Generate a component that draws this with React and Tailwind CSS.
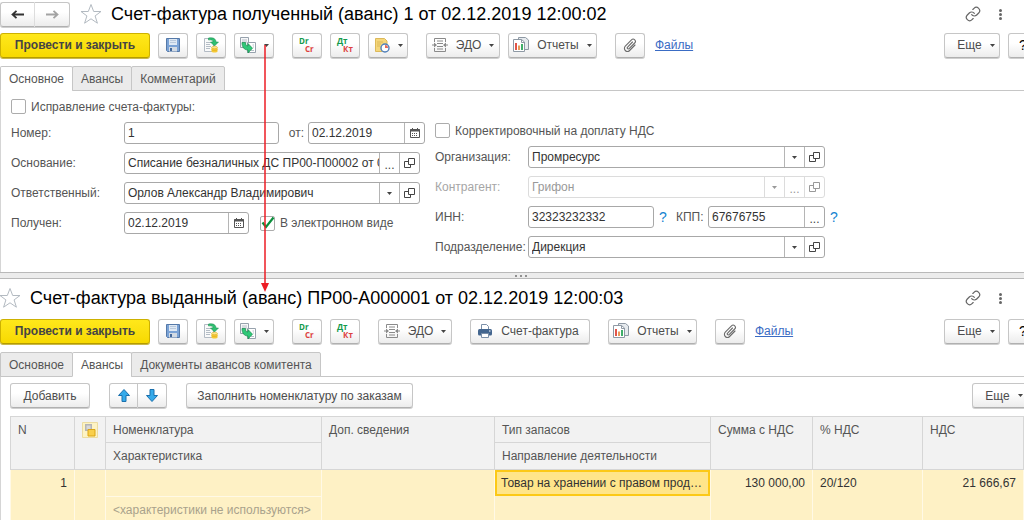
import clsx from "clsx";
import { Link } from "lucide-react";

const FONT = "font-['Liberation_Sans',Arial,sans-serif]";

/* ---------- icons ---------- */

function Caret({ className = "text-[#444]" }) {
  return (
    <svg className={clsx("shrink-0", className)} width="5" height="3" viewBox="0 0 5 3" fill="currentColor">
      <path d="M0 0h5L2.5 3z" />
    </svg>
  );
}

function SaveIcon() {
  return (
    <svg width="16" height="16" viewBox="0 0 16 16">
      <path d="M1.5 1.5h13v13h-12l-1-1z" fill="#7ba3d6" stroke="#5579a8" />
      <path d="M4 2h8v6H4z" fill="#dfe9f4" />
      <path d="M5 3.5h6M5 5.5h6" stroke="#b9c9dc" />
      <path d="M4 10h8v4.5H4z" fill="#d3dbe4" />
      <path d="M5 11h2v3H5z" fill="#44699b" />
    </svg>
  );
}

function PostIcon() {
  return (
    <svg width="16" height="16" viewBox="0 0 16 16">
      <path d="M1.5 1.5h9v13h-9z" fill="#fafafa" stroke="#b3bbc4" />
      <path d="M3 5.5h5M3 7.5h4M3 9.5h5M3 11.5h4" stroke="#b4bdc6" />
      <path d="M5.5 1c5-1 7.500 1 7.500 4h2.500L11.500 9 7.500 5H10c0-1.500-1.500-2.500-4.500-2z" fill="#2fbf71" stroke="#16894b" strokeWidth=".5" />
      <path d="M8.500 10.500h6v4c0 1.300-6 1.300-6 0z" fill="#f6c935" />
      <ellipse cx="11.500" cy="10.500" rx="3" ry="1.200" fill="#fce48b" stroke="#d9a91a" strokeWidth=".5" />
      <path d="M8.500 12.500c0 1.200 6 1.200 6 0" fill="none" stroke="#d9a91a" strokeWidth=".6" />
    </svg>
  );
}

function BasedOnIcon() {
  return (
    <svg width="16" height="16" viewBox="0 0 16 16">
      <path d="M.5.500h8v10h-8z" fill="#f7f8f9" stroke="#97a2ad" />
      <path d="M2 3h5M2 5h5" stroke="#b4bdc6" />
      <path d="M7.500 5.500h8v10h-8z" fill="#fff" stroke="#97a2ad" />
      <path d="M12.500 8h1.500M13 10h1M11 13.500h3" stroke="#b4bdc6" />
      <path d="M2 5.500h3.500c0 2.500.8 3.500 2.500 3.500V6.500l4.500 4.700L8 16v-3C4 13 2 10 2 5.500z" fill="#2fc878" stroke="#16894b" strokeWidth=".7" />
    </svg>
  );
}

function PostingsIcon({ top, bottom }) {
  return (
    <svg width="20" height="18" viewBox="0 0 20 18" fontFamily="Open Sans, sans-serif" fontSize="8" fontWeight="700">
      <text x="2" y="8" fill="#149a4d">{top}</text>
      <text x="8" y="16" fill="#dd4040">{bottom}</text>
    </svg>
  );
}

function ScheduleIcon() {
  return (
    <svg width="16" height="16" viewBox="0 0 16 16">
      <path d="M1.500 1.500h9l2.500 2.500v10.500H1.500z" fill="#f5d77b" stroke="#dcb95a" />
      <path d="M3 5h6M3 7h4M3 9h3" stroke="#dcb95a" />
      <circle cx="11" cy="11" r="4" fill="#fff" stroke="#4f7fba" strokeWidth="1.400" />
      <path d="M11 8v3h3a3 3 0 0 0-3-3z" fill="#e66a5c" />
    </svg>
  );
}

function EdoIcon() {
  return (
    <svg width="16" height="16" viewBox="0 0 16 16" fill="none" stroke="#8a8a8a">
      <path d="M2.500 5V1.500h11V5M2.500 11v3.500h11V11" />
      <path d="M5 4h6M5 6.500h6M5 9.500h6M5 12h6" />
      <path d="M0 8h3M13 8h3" />
      <path d="M2 5.500L5 8l-3 2.500zM14 5.500L11 8l3 2.500z" fill="#8a8a8a" stroke="none" />
    </svg>
  );
}

function ReportsIcon() {
  return (
    <svg width="16" height="16" viewBox="0 0 16 16">
      <path d="M5.500.500h7l3 2.500v9.500h-10z" fill="#e6eaee" stroke="#8e99a4" />
      <path d="M.5 2.500h8l3 2.500v9.500H.5z" fill="#fff" stroke="#8e99a4" />
      <path d="M8.500 2.500v3h3" fill="none" stroke="#8e99a4" />
      <path d="M2 6h2v7H2z" fill="#e25549" />
      <path d="M5 8.500h2V13H5z" fill="#e89a5a" />
      <path d="M8 7h2v6H8z" fill="#3fae69" />
    </svg>
  );
}

function ClipIcon() {
  return (
    <svg width="14" height="14" viewBox="0 0 14 14" fill="none" stroke="#6b6b6b" strokeWidth="1.100" strokeLinecap="round">
      <path d="M9.500 4L4.600 9.200a1 1 0 0 0 1.500 1.500L11.700 5a2.200 2.200 0 0 0-3.200-3.200L2.300 8.200a3 3 0 0 0 4.300 4.300L12 7" />
    </svg>
  );
}

function PrinterIcon() {
  return (
    <svg width="16" height="16" viewBox="0 0 16 16">
      <path d="M4.500 7V1.500h5l2 2V7" fill="#fff" stroke="#7b8fa8" />
      <rect x="1" y="6" width="14" height="6.500" rx="1.500" fill="#44668f" />
      <path d="M4.500 10.500h7v4h-7z" fill="#fff" stroke="#7b8fa8" />
      <path d="M12 8h1.500" stroke="#fff" />
    </svg>
  );
}

function StarIcon() {
  return (
    <svg width="24" height="22" viewBox="0 0 24 22" fill="#fff" stroke="#b3bac1">
      <path d="M12 1.500l2.700 7h7.300l-5.900 4.400 2.300 7.300L12 15.800l-6.400 4.400 2.300-7.300L2 8.500h7.300z" />
    </svg>
  );
}

function CalendarIcon() {
  return (
    <svg width="10" height="10" viewBox="0 0 10 10" fill="none" stroke="#555">
      <path d="M.5 1.500h9v8h-9z" />
      <path d="M0 2.500h10" strokeWidth="2" />
      <path d="M2.500 0v2M7.500 0v2" />
      <path d="M2 5.500h6M2 7.500h6" strokeDasharray="1 1" />
    </svg>
  );
}

function OpenIcon() {
  return (
    <svg width="11" height="10" viewBox="0 0 11 10" fill="none" stroke="currentColor">
      <path d="M4.500.500h6v6h-6z" />
      <path d="M4 3.500H.5v6h6V7" />
    </svg>
  );
}

function NavArrow({ back }) {
  return (
    <svg width="13" height="9" viewBox="0 0 13 9" fill="none" stroke={back ? "#333" : "#a3a3a3"} strokeWidth="1.800">
      {back ? <path d="M13 4.500H2M5.500.800L1.500 4.500l4 3.700" /> : <path d="M0 4.500h11M7.500.800l4 3.700-4 3.700" />}
    </svg>
  );
}

function MoveArrow({ down }) {
  return (
    <svg width="12" height="13" viewBox="0 0 12 13" fill="#35aaea" stroke="#1b70ad" strokeLinejoin="round">
      {down ? <path d="M4 .5h4v6h3.500L6 12.500.5 6.500H4z" /> : <path d="M4 12.500h4v-6h3.500L6 .5.5 6.500H4z" />}
    </svg>
  );
}

function StockIcon() {
  return (
    <svg width="16" height="16" viewBox="0 0 16 16">
      <path d="M.5.500h15v15H.5z" fill="#fdf3c4" stroke="#ecdca0" />
      <path d="M3 2h7v7H3z" fill="#b5b5b5" />
      <path d="M4.500 3.500h4v4h-4z" fill="#d9d9d9" />
      <path d="M6 7.500h7v6.500H6z" fill="#f9cf4b" stroke="#dba514" />
    </svg>
  );
}

/* ---------- controls ---------- */

const raised =
  "border border-[#c6c6c6] border-b-[#b0b0b0] bg-linear-to-b from-white from-40% to-[#ececec] text-[#4d4d4d] shadow-[0_1px_0_#cfcfcf]";

function Button({ className, children, ...rest }) {
  return (
    <button
      type="button"
      className={clsx("flex h-[25px] shrink-0 items-center justify-center rounded-[3px] whitespace-nowrap", raised, className)}
      {...rest}
    >
      {children}
    </button>
  );
}

function Check({ label, checked }) {
  return (
    <label className="flex h-[15px] items-center gap-[5px] whitespace-nowrap">
      <span className="relative flex">
        <input
          type="checkbox"
          defaultChecked={checked}
          className="peer size-[15px] appearance-none rounded-[2px] border border-[#acacac] bg-white"
        />
        <svg
          className="pointer-events-none absolute top-0 left-0 hidden peer-checked:block"
          width="15"
          height="15"
          viewBox="0 0 15 15"
          fill="none"
          stroke="#0b8f3c"
          strokeWidth="2.200"
        >
          <path d="M2.500 6.500l3.500 4.500L13.500 1.500" />
        </svg>
      </span>
      {label}
    </label>
  );
}

const fieldButtons = {
  calendar: { label: "Выбрать дату", icon: <CalendarIcon /> },
  list: { label: "Показать список", icon: <Caret className="" /> },
  choose: { label: "Выбрать", icon: <span className="pt-1">...</span> },
  open: { label: "Открыть", icon: <OpenIcon /> },
};

function Field({ id, value, buttons = [], disabled, className }) {
  return (
    <div
      className={clsx(
        "flex h-[22px] shrink-0 overflow-hidden rounded-[3px] border bg-white",
        disabled ? "border-[#dcdcdc] text-[#999]" : "border-[#a8a8a8] text-[#333]",
        className
      )}
    >
      <input id={id} defaultValue={value} disabled={disabled} className="min-w-0 flex-1 pl-[3px]" />
      {buttons.map((b) => (
        <button
          key={b}
          type="button"
          disabled={disabled}
          aria-label={fieldButtons[b].label}
          className={clsx(
            "flex w-5 shrink-0 items-center justify-center border-l",
            disabled ? "border-[#dcdcdc]" : "border-[#b5b5b5] text-[#444]"
          )}
        >
          {fieldButtons[b].icon}
        </button>
      ))}
    </div>
  );
}

function Row({ id, label, labelClass, muted, children }) {
  return (
    <div className="flex h-[22px] items-center">
      <label htmlFor={id} className={clsx("shrink-0 whitespace-nowrap", labelClass, muted && "text-[#a6a6a6]")}>
        {label}
      </label>
      {children}
    </div>
  );
}

function Hint() {
  return (
    <button type="button" aria-label="Подсказка" className="w-[18px] shrink-0 text-center text-sm text-[#1583d0]">
      ?
    </button>
  );
}

function TitleBar({ title, nav }) {
  return (
    <header className="flex h-7 items-center">
      {nav && (
        <div className="mr-[9px] flex">
          <Button className="h-6 w-[35px] rounded-r-none border-r-[#ddd]" aria-label="Назад">
            <NavArrow back />
          </Button>
          <Button className="h-6 w-[35px] rounded-l-none border-l-0" aria-label="Вперед">
            <NavArrow />
          </Button>
        </div>
      )}
      <button type="button" aria-label="В избранное" className={nav ? "" : "-ml-0.5"}>
        <StarIcon />
      </button>
      <h1 className="ml-2 text-lg whitespace-nowrap text-black">{title}</h1>
      <div className="mr-[22px] ml-auto flex items-center gap-[18px]">
        <button type="button" aria-label="Получить ссылку">
          <Link size={16} strokeWidth={1.8} color="#666" />
        </button>
        <button type="button" aria-label="Меню" className="flex flex-col gap-px">
          <i className="size-[3px] rounded-full bg-[#666]" />
          <i className="size-[3px] rounded-full bg-[#666]" />
          <i className="size-[3px] rounded-full bg-[#666]" />
        </button>
      </div>
    </header>
  );
}

// The toolbar is wider than the window: the help button is cut off at the right edge.
function Toolbar({ children }) {
  return (
    <div className="-mr-[14px] flex h-[26px] items-center gap-2">
      <button
        type="button"
        className="h-[25px] w-[150px] shrink-0 rounded-[3px] border border-[#cdb100] border-b-[#b59c00] bg-linear-to-b from-[#ffe81a] to-[#f7d900] font-bold whitespace-nowrap text-[#444] shadow-[0_1px_0_#c9b84a]"
      >
        Провести и закрыть
      </button>
      <Button className="w-[30px]" aria-label="Записать"><SaveIcon /></Button>
      <Button className="w-[30px]" aria-label="Провести"><PostIcon /></Button>
      <Button className="w-10 gap-2" aria-label="Создать на основании"><BasedOnIcon /><Caret /></Button>
      <Button className="ml-[10px] w-[30px]" aria-label="Проводки Dr/Cr"><PostingsIcon top="Dr" bottom="Cr" /></Button>
      <Button className="w-[30px]" aria-label="Проводки Дт/Кт"><PostingsIcon top="Дт" bottom="Кт" /></Button>
      {children}
      <Button className="ml-[10px] w-[30px]" aria-label="Присоединенные файлы"><ClipIcon /></Button>
      <a href="#files" className="ml-[2px] text-[#3a6cc4] underline">Файлы</a>
      <Button className="ml-auto w-14 gap-2 pl-2">Еще <Caret /></Button>
      <Button className="w-[30px] text-sm text-black" aria-label="Справка">?</Button>
    </div>
  );
}

function Tabs({ items, active }) {
  return (
    <div role="tablist" className="flex h-[25px] border-b border-[#c6c6c6]">
      {items.map((t) => (
        <button
          key={t}
          type="button"
          role="tab"
          aria-selected={t === active}
          className={clsx(
            "-mr-px h-[25px] rounded-t-[2px] border border-[#c6c6c6] px-2 whitespace-nowrap",
            t === active ? "border-b-white bg-white" : "bg-[#ebebeb]"
          )}
        >
          {t}
        </button>
      ))}
    </div>
  );
}

/* ---------- windows ---------- */

function ReceivedInvoice() {
  return (
    <section>
      <TitleBar nav title="Счет-фактура полученный (аванс) 1 от 02.12.2019 12:00:02" />
      <div className="mt-1 mb-2">
        <Toolbar>
          <Button className="w-10 gap-2" aria-label="Отложить"><ScheduleIcon /><Caret /></Button>
          <Button className="ml-[10px] w-[74px] gap-2"><EdoIcon />ЭДО<Caret /></Button>
          <Button className="w-[89px] gap-2"><ReportsIcon />Отчеты<Caret /></Button>
        </Toolbar>
      </div>
      <Tabs items={["Основное", "Авансы", "Комментарий"]} active="Основное" />
      <div className="flex h-[181px] gap-[10px] border-l border-[#d5d5d5] pl-[10px]">
        <div className="flex w-[414px] shrink-0 flex-col gap-2 pt-2">
          <Check label="Исправление счета-фактуры:" />
          <Row id="number" label="Номер:" labelClass="w-[113px]">
            <Field id="number" value="1" className="w-[155px]" />
            <label htmlFor="date" className="w-[29px] pr-1 text-right">от:</label>
            <Field id="date" value="02.12.2019" buttons={["calendar"]} className="w-[117px]" />
          </Row>
          <Row id="basis" label="Основание:" labelClass="w-[113px]">
            <Field
              id="basis"
              value="Списание безналичных ДС ПР00-П00002 от 02.12.2019"
              buttons={["choose", "open"]}
              className="w-[296px]"
            />
          </Row>
          <Row id="person" label="Ответственный:" labelClass="w-[113px]">
            <Field id="person" value="Орлов Александр Владимирович" buttons={["list", "open"]} className="w-[296px]" />
          </Row>
          <Row id="received" label="Получен:" labelClass="w-[113px]">
            <Field id="received" value="02.12.2019" buttons={["calendar"]} className="mr-[11px] w-[125px]" />
            <Check label="В электронном виде" checked />
          </Row>
        </div>
        <div className="flex shrink-0 flex-col gap-2 pt-8">
          <Check label="Корректировочный на доплату НДС" />
          <Row id="org" label="Организация:" labelClass="w-[93px]">
            <Field id="org" value="Промресурс" buttons={["list", "open"]} className="w-[297px]" />
          </Row>
          <Row id="partner" label="Контрагент:" labelClass="w-[93px]" muted>
            <Field id="partner" value="Грифон" buttons={["list", "choose", "open"]} disabled className="w-[297px]" />
          </Row>
          <Row id="inn" label="ИНН:" labelClass="w-[93px]">
            <Field id="inn" value="32323232332" className="w-[126px]" />
            <Hint />
            <label htmlFor="kpp" className="w-9 pl-1">КПП:</label>
            <Field id="kpp" value="67676755" buttons={["choose"]} className="w-[117px]" />
            <Hint />
          </Row>
          <Row id="unit" label="Подразделение:" labelClass="w-[93px]">
            <Field id="unit" value="Дирекция" buttons={["list", "open"]} className="w-[297px]" />
          </Row>
        </div>
      </div>
    </section>
  );
}

function Splitter() {
  return (
    <div className="flex h-[7px] items-center justify-center gap-[3px] border-y border-[#b9b9b9] bg-[#ececec] pl-[18px]">
      <i className="size-[2px] bg-[#909090]" />
      <i className="size-[2px] bg-[#909090]" />
      <i className="size-[2px] bg-[#909090]" />
    </div>
  );
}

function AdvancesTable() {
  const th = "border border-[#d6d6d6] px-[7px] pt-[5px] text-left align-top font-normal whitespace-nowrap";
  const td = "border-x border-[#fff9e6] px-[7px] pt-[5px] align-top whitespace-nowrap";
  return (
    <table className="w-full table-fixed border-collapse border border-[#b9b9b9]">
      <colgroup>
        <col className="w-16" />
        <col className="w-[31px]" />
        <col className="w-[216px]" />
        <col className="w-[173px]" />
        <col className="w-[216px]" />
        <col className="w-[102px]" />
        <col className="w-[110px]" />
        <col />
      </colgroup>
      <thead className="bg-[#f2f2f2]">
        <tr className="h-[26px]">
          <th rowSpan={2} className={th}>N</th>
          <th rowSpan={2} className={th} aria-label="Состояние"><StockIcon /></th>
          <th className={th}>Номенклатура</th>
          <th rowSpan={2} className={th}>Доп. сведения</th>
          <th className={th}>Тип запасов</th>
          <th rowSpan={2} className={th}>Сумма с НДС</th>
          <th rowSpan={2} className={th}>% НДС</th>
          <th rowSpan={2} className={th}>НДС</th>
        </tr>
        <tr className="h-[27px]">
          <th className={th}>Характеристика</th>
          <th className={th}>Направление деятельности</th>
        </tr>
      </thead>
      <tbody className="bg-[#fef1c5] text-[#333]">
        <tr className="h-[26px]">
          <td rowSpan={2} className={clsx(td, "text-right")}>1</td>
          <td rowSpan={2} className={td} />
          <td className={clsx(td, "border-b")} />
          <td rowSpan={2} className={td} />
          <td className="p-0">
            <div className="h-[26px] truncate border-2 border-[#fcc917] bg-[#ffe58a] px-1 leading-[22px]">
              Товар на хранении с правом продажи
            </div>
          </td>
          <td rowSpan={2} className={clsx(td, "text-right")}>130 000,00</td>
          <td rowSpan={2} className={td}>20/120</td>
          <td rowSpan={2} className={clsx(td, "text-right")}>21 666,67</td>
        </tr>
        <tr className="h-[27px]">
          <td className={clsx(td, "text-[#a9a28c]")}>&lt;характеристики не используются&gt;</td>
          <td className={td} />
        </tr>
      </tbody>
    </table>
  );
}

function IssuedInvoice() {
  return (
    <section className="pt-[5px]">
      <TitleBar title="Счет-фактура выданный (аванс) ПР00-А000001 от 02.12.2019 12:00:03" />
      <div className="mt-[6px] mb-2">
        <Toolbar>
          <Button className="ml-[10px] w-[74px] gap-2"><EdoIcon />ЭДО<Caret /></Button>
          <Button className="ml-[10px] w-[120px] gap-2 pr-1"><PrinterIcon />Счет-фактура</Button>
          <Button className="ml-[10px] w-[89px] gap-2"><ReportsIcon />Отчеты<Caret /></Button>
        </Toolbar>
      </div>
      <Tabs items={["Основное", "Авансы", "Документы авансов комитента"]} active="Авансы" />
      <div className="border-l border-[#d5d5d5] pt-[6px] pl-[9px]">
        <div className="-mr-1 mb-2 flex">
          <Button className="mr-[19px] w-20">Добавить</Button>
          <Button className="w-[29px] rounded-r-none" aria-label="Переместить вверх"><MoveArrow /></Button>
          <Button className="mr-[19px] w-[29px] rounded-l-none border-l-0" aria-label="Переместить вниз"><MoveArrow down /></Button>
          <Button className="w-[227px]">Заполнить номенклатуру по заказам</Button>
          <Button className="ml-auto w-14 gap-2 pl-2">Еще <Caret /></Button>
        </div>
        <AdvancesTable />
      </div>
    </section>
  );
}

export default function App() {
  return (
    <main className={clsx("relative h-screen overflow-hidden bg-white text-xs leading-4 text-[#555]", FONT)}>
      <ReceivedInvoice />
      <Splitter />
      <IssuedInvoice />
      {/* arrow from "create based on" to the document it produced */}
      <svg className="pointer-events-none absolute top-[45px] left-[260px]" width="10" height="247" viewBox="0 0 10 247">
        <path d="M5 0v240" stroke="#ec1c24" strokeWidth="1.500" />
        <path d="M1 238h8l-4 9z" fill="#ec1c24" />
      </svg>
    </main>
  );
}
